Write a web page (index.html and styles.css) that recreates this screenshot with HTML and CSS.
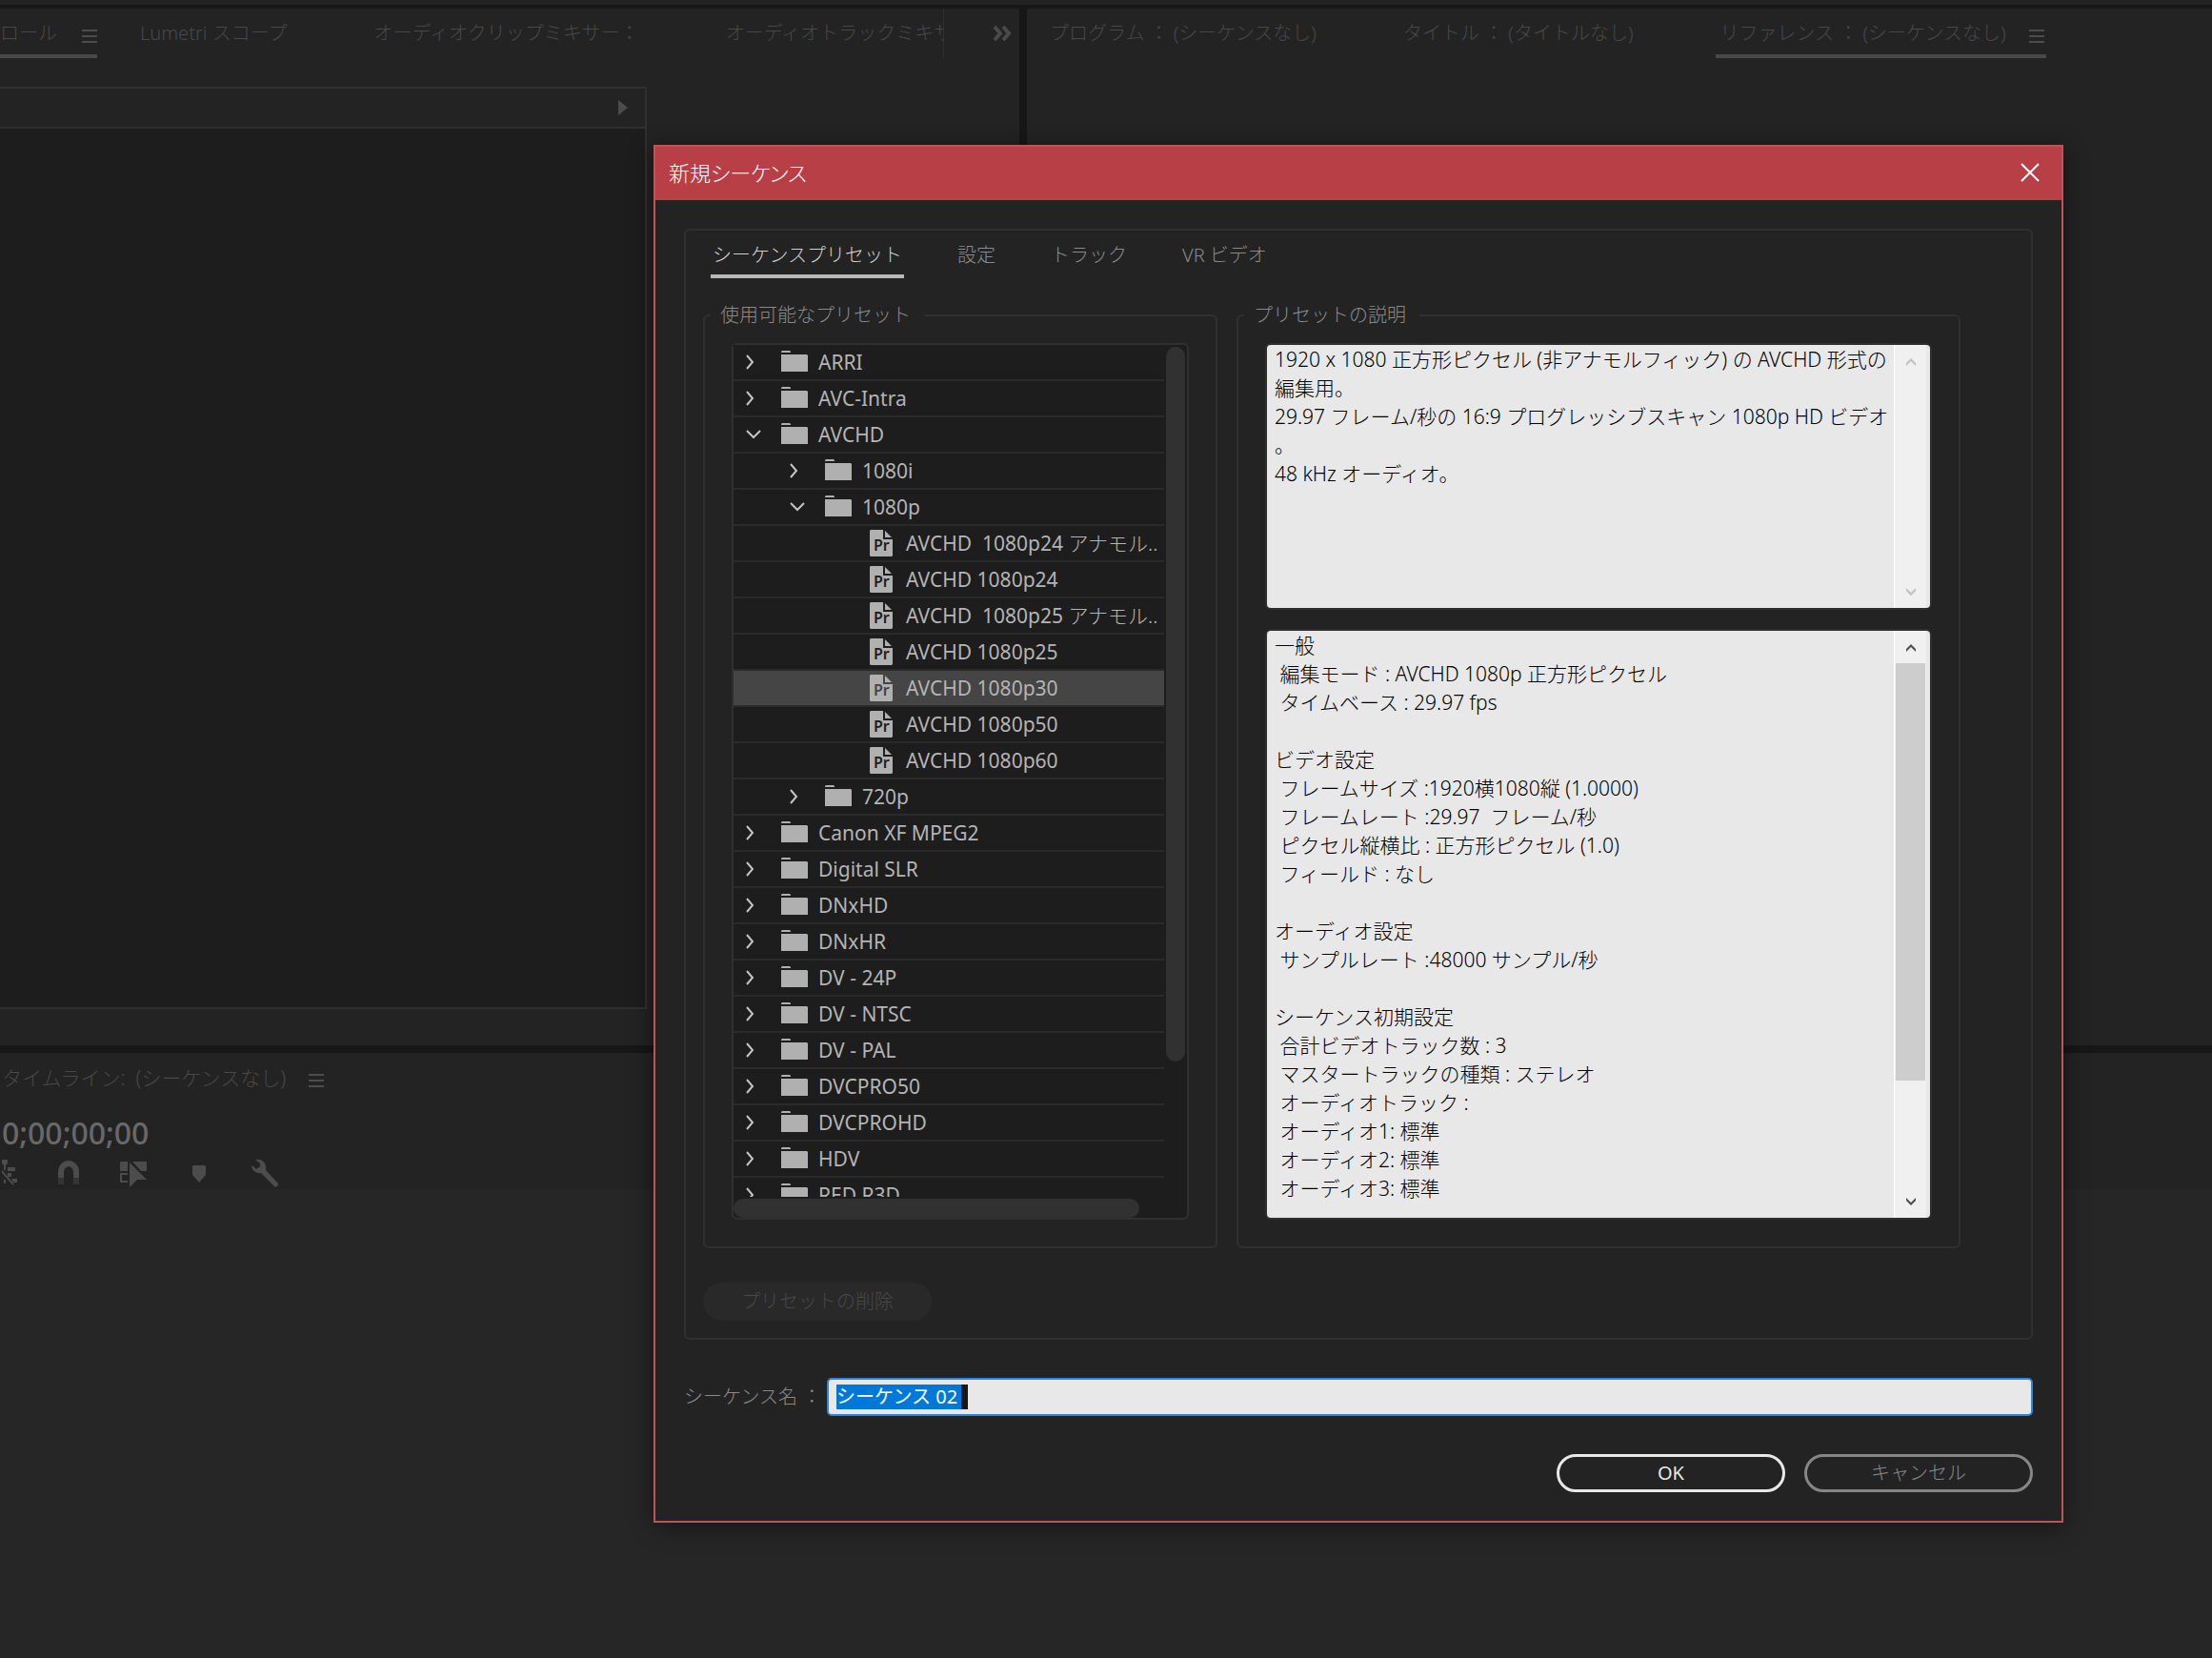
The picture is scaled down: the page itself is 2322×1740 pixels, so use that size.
FILE: index.html
```html
<!DOCTYPE html>
<html lang="ja">
<head>
<meta charset="utf-8">
<title>新規シーケンス</title>
<link rel="stylesheet" href="styles.css">
</head>
<body>
<svg class="defs" aria-hidden="true">
  <symbol id="folder" viewBox="0 0 28 22"><path d="M0 2V1L1 0H9L10 1V2ZM0 4H27L28 5V22H0Z" fill="#b0b0b0"/></symbol>
  <symbol id="closed" viewBox="0 0 16 16"><path d="M1 1L7 8L1 15" fill="none" stroke="#c4c4c4" stroke-width="2"/></symbol>
  <symbol id="opened" viewBox="0 0 16 16"><path d="M1 4L8 11L15 4" fill="none" stroke="#c4c4c4" stroke-width="2"/></symbol>
  <symbol id="preset" viewBox="0 0 24 28"><path d="M0 1L1 0H14V10H24V27L23 28H1L0 27Z" fill="#b0b0b0"/><path d="M16 1L23 8H16Z" fill="#b0b0b0"/><text x="4" y="22" class="pr">Pr</text></symbol>
  <symbol id="menu" viewBox="0 0 16 14"><path d="M0 1H16M0 7H16M0 13H16" stroke="#4c4c4c" stroke-width="2"/></symbol>
  <symbol id="up" viewBox="0 0 12 10"><path d="M1 9V6L6 1L11 6V9L6 4Z" fill="currentColor"/></symbol>
  <symbol id="down" viewBox="0 0 12 10"><path d="M1 1V4L6 9L11 4V1L6 6Z" fill="currentColor"/></symbol>
</svg>

<main class="workspace">
  <div class="topstrip"></div>
  <div class="upper">
    <section class="panel source">
      <nav class="paneltabs">
        <div class="clip">
          <button class="ptab active">ロール<svg class="menu"><use href="#menu"/></svg></button>
          <button class="ptab">Lumetri スコープ</button>
          <button class="ptab">オーディオクリップミキサー：</button>
          <button class="ptab">オーディオトラックミキサー：</button>
        </div>
        <button class="more" aria-label="その他のパネル"><svg width="20" height="16" viewBox="0 0 20 16"><path d="M2 1L8 8L2 15M11 1L17 8L11 15" fill="none" stroke="#4a4a4a" stroke-width="4"/></svg></button>
      </nav>
      <div class="effects">
        <div class="effectshead"><svg width="10" height="16"><path d="M0 0L10 8L0 16Z" fill="#4c4c4c"/></svg></div>
      </div>
    </section>
    <section class="panel program">
      <nav class="paneltabs">
        <button class="ptab">プログラム ： (シーケンスなし)</button>
        <button class="ptab">タイトル ： (タイトルなし)</button>
        <button class="ptab active">リファレンス ： (シーケンスなし)<svg class="menu"><use href="#menu"/></svg></button>
      </nav>
    </section>
  </div>
  <section class="timeline">
    <div class="timehead">
      <h2>タイムライン:&nbsp; (シーケンスなし)<svg class="menu"><use href="#menu"/></svg></h2>
      <div class="timecode">0;00;00;00</div>
      <div class="tools">
        <svg width="16" height="30" viewBox="2 0 16 30"><path d="M2 1H8V5L6 7V12H4V7L2 5ZM8 9H16V13H8ZM8 15H12V19H8ZM12 21H18V25H14ZM0 20H2V24H0ZM4 22H6V26H4Z" fill="#4c4c4c"/><path d="M0 11L14 27" stroke="#4c4c4c" stroke-width="2"/></svg>
        <svg width="22" height="30" viewBox="0 0 22 30"><path d="M3 20V14A8 9 0 0 1 19 14V20" fill="none" stroke="#4c4c4c" stroke-width="6"/><path d="M0 20H6V27H0ZM16 20H22V27H16Z" fill="#343434"/></svg>
        <svg width="28" height="30" viewBox="0 0 28 30"><path d="M0 3H8V13H0ZM13 3H28V13H22ZM10 4L28 22H18L10 30Z" fill="#4c4c4c"/><path d="M8 16H1V24H8" fill="none" stroke="#4c4c4c" stroke-width="2"/></svg>
        <svg width="24" height="30" viewBox="-5 0 24 30"><path d="M0 8L1 7H13L14 8V17L7 25L0 17Z" fill="#4c4c4c"/></svg>
        <svg width="28" height="30" viewBox="0 0 28 30"><path d="M4 1Q11 0 14 5Q16 8 15 12L28 26V28L25 30L10 15Q3 16 0 9L1 7L5 11L9 8L9 5Z" fill="#4c4c4c"/></svg>
      </div>
    </div>
  </section>
</main>

<div class="dialog" role="dialog" aria-labelledby="dlgtitle">
  <header class="titlebar">
    <h1 id="dlgtitle">新規シーケンス</h1>
    <button class="close" aria-label="閉じる"><svg width="20" height="20"><path d="M1 1L19 19M19 1L1 19" stroke="#fff" stroke-width="2"/></svg></button>
  </header>
  <div class="body">
    <div class="tabbox">
      <nav class="tabs">
        <button class="tab on">シーケンスプリセット</button>
        <button class="tab">設定</button>
        <button class="tab">トラック</button>
        <button class="tab">VR ビデオ</button>
      </nav>
      <div class="columns">
        <fieldset>
          <legend>使用可能なプリセット</legend>
          <div class="treebox">
            <ul class="tree">
              <li><svg class="arrow"><use href="#closed"/></svg><svg class="folder"><use href="#folder"/></svg>ARRI</li>
              <li><svg class="arrow"><use href="#closed"/></svg><svg class="folder"><use href="#folder"/></svg>AVC-Intra</li>
              <li><svg class="arrow"><use href="#opened"/></svg><svg class="folder"><use href="#folder"/></svg>AVCHD</li>
              <li class="l1"><svg class="arrow"><use href="#closed"/></svg><svg class="folder"><use href="#folder"/></svg>1080i</li>
              <li class="l1"><svg class="arrow"><use href="#opened"/></svg><svg class="folder"><use href="#folder"/></svg>1080p</li>
              <li class="l2"><svg class="file"><use href="#preset"/></svg>AVCHD&nbsp; 1080p24 <span class="kana">アナモル..</span></li>
              <li class="l2"><svg class="file"><use href="#preset"/></svg>AVCHD 1080p24</li>
              <li class="l2"><svg class="file"><use href="#preset"/></svg>AVCHD&nbsp; 1080p25 <span class="kana">アナモル..</span></li>
              <li class="l2"><svg class="file"><use href="#preset"/></svg>AVCHD 1080p25</li>
              <li class="l2 selected"><svg class="file"><use href="#preset"/></svg>AVCHD 1080p30</li>
              <li class="l2"><svg class="file"><use href="#preset"/></svg>AVCHD 1080p50</li>
              <li class="l2"><svg class="file"><use href="#preset"/></svg>AVCHD 1080p60</li>
              <li class="l1"><svg class="arrow"><use href="#closed"/></svg><svg class="folder"><use href="#folder"/></svg>720p</li>
              <li><svg class="arrow"><use href="#closed"/></svg><svg class="folder"><use href="#folder"/></svg>Canon XF MPEG2</li>
              <li><svg class="arrow"><use href="#closed"/></svg><svg class="folder"><use href="#folder"/></svg>Digital SLR</li>
              <li><svg class="arrow"><use href="#closed"/></svg><svg class="folder"><use href="#folder"/></svg>DNxHD</li>
              <li><svg class="arrow"><use href="#closed"/></svg><svg class="folder"><use href="#folder"/></svg>DNxHR</li>
              <li><svg class="arrow"><use href="#closed"/></svg><svg class="folder"><use href="#folder"/></svg>DV - 24P</li>
              <li><svg class="arrow"><use href="#closed"/></svg><svg class="folder"><use href="#folder"/></svg>DV - NTSC</li>
              <li><svg class="arrow"><use href="#closed"/></svg><svg class="folder"><use href="#folder"/></svg>DV - PAL</li>
              <li><svg class="arrow"><use href="#closed"/></svg><svg class="folder"><use href="#folder"/></svg>DVCPRO50</li>
              <li><svg class="arrow"><use href="#closed"/></svg><svg class="folder"><use href="#folder"/></svg>DVCPROHD</li>
              <li><svg class="arrow"><use href="#closed"/></svg><svg class="folder"><use href="#folder"/></svg>HDV</li>
              <li><svg class="arrow"><use href="#closed"/></svg><svg class="folder"><use href="#folder"/></svg>RED R3D</li>
            </ul>
            <div class="vbar"></div>
            <div class="hbar"></div>
          </div>
        </fieldset>
        <fieldset class="info">
          <legend>プリセットの説明</legend>
          <div class="textbox short">
            <textarea readonly aria-label="プリセットの説明">1920 x 1080 正方形ピクセル (非アナモルフィック) の AVCHD 形式の
編集用。
29.97 フレーム/秒の 16:9 プログレッシブスキャン 1080p HD ビデオ
。
48 kHz オーディオ。</textarea>
            <div class="scroll idle"><svg width="12" height="10"><use href="#up"/></svg><svg width="12" height="10"><use href="#down"/></svg></div>
          </div>
          <div class="textbox long">
            <textarea readonly aria-label="プリセットの詳細">一般
 編集モード : AVCHD 1080p 正方形ピクセル
 タイムベース : 29.97 fps

ビデオ設定
 フレームサイズ :1920横1080縦 (1.0000)
 フレームレート :29.97  フレーム/秒
 ピクセル縦横比 : 正方形ピクセル (1.0)
 フィールド : なし

オーディオ設定
 サンプルレート :48000 サンプル/秒

シーケンス初期設定
 合計ビデオトラック数 : 3
 マスタートラックの種類 : ステレオ
 オーディオトラック :
 オーディオ1: 標準
 オーディオ2: 標準
 オーディオ3: 標準</textarea>
            <div class="scroll"><svg width="12" height="10"><use href="#up"/></svg><div class="track"><div class="thumb"></div></div><svg width="12" height="10"><use href="#down"/></svg></div>
          </div>
        </fieldset>
      </div>
      <button class="pill delete" disabled>プリセットの削除</button>
    </div>
    <div class="namerow">
      <label for="seqname">シーケンス名 ：</label>
      <div class="field"><input id="seqname" type="text" value="シーケンス 02"><span class="caret"></span></div>
    </div>
    <div class="actions">
      <button class="pill ok">OK</button>
      <button class="pill cancel">キャンセル</button>
    </div>
  </div>
</div>
</body>
</html>
```
FILE: styles.css
```css
* { box-sizing: border-box; }
body {
  margin: 0;
  background: #262626;
  color: #8a8a8a;
  font-family: "Noto Sans", "Noto Sans CJK JP", sans-serif;
  font-size: 20px;
  font-weight: 300;
  line-height: 30px;
}
button, input, textarea { font: inherit; color: inherit; background: none; border: 0; padding: 0; margin: 0; }
h1, h2 { margin: 0; font-size: 20px; font-weight: 300; }
svg { flex: none; display: block; }
svg.defs { display: none; }

/* Workspace behind the dialog */
.workspace { display: flex; flex-direction: column; min-height: 100vh; color: #484848; }
.topstrip { height: 9px; background: #232323; border-bottom: 4px solid #171717; }
.upper { flex: 1088 1 0; display: flex; gap: 8px; background: #171717; border-bottom: 8px solid #171717; }
.panel { background: #232323; display: flex; flex-direction: column; }
.source { width: 1070px; }
.program { flex: 1; }
.paneltabs { display: flex; height: 52px; }
.program .paneltabs { padding-left: 20px; gap: 46px; }
.clip { display: flex; gap: 45px; width: 991px; overflow: hidden; border-right: 1px solid #303030; }
.more { margin-left: 51px; }
.ptab { flex: none; display: flex; align-items: center; padding: 4px 41px 0 4px; white-space: nowrap; border-bottom: 4px solid transparent; }
.clip .ptab { padding: 4px 46px 0 0; }
.ptab.active { border-color: #484848; padding-right: 2px; }
.menu { width: 16px; height: 14px; margin: 6px 0 0 24px; }
.clip .ptab.active { padding-right: 0; }
.clip .menu { margin-left: 26px; }
.effects { flex: 1; margin: 30px 391px 38px 0; border: 2px solid #303030; border-left: 0; background: #1d1d1d; }
.effectshead { height: 42px; background: #232323; border-bottom: 2px solid #303030; display: flex; justify-content: flex-end; align-items: center; padding-right: 18px; }
.timeline { flex: 635 1 0; }
.timehead { background: #232323; height: 143px; padding: 11px 0 0 2px; }
.timehead h2 { display: flex; align-items: center; font-size: 21px; line-height: 30px; }
.timecode { font-size: 32px; font-weight: 500; line-height: 40px; margin-top: 23px; color: #686868; }
.tools { display: flex; gap: 43px; margin-top: 7px; }

/* Dialog window */
.dialog { position: absolute; left: 686px; right: 156px; top: 152px; background: #232323; border: 2px solid #bd5459; box-shadow: 0 4px 24px rgba(0, 0, 0, .45); }
.titlebar { height: 56px; background: #b83f46; display: flex; justify-content: space-between; align-items: center; padding: 0 23px 2px 14px; color: #fff; }
.titlebar h1 { font-size: 22px; font-weight: 300; font-feature-settings: "palt"; }
.body { padding: 30px; }
.tabbox { border: 2px solid #303030; border-radius: 6px; padding: 0 18px 18px; }
.tabs { display: flex; gap: 54px; padding-left: 8px; height: 50px; }
.tab { padding: 6px 2px 0; border-bottom: 4px solid transparent; color: #8a8a8a; }
.tab.on { color: #d0d0d0; border-color: #b8b8b8; }
.columns { display: grid; grid-template-columns: 540fr 760fr; gap: 20px; margin-top: 24px; padding-right: 56px; }
fieldset { min-width: 0; margin: 0; border: 2px solid #303030; border-radius: 6px; padding: 14px 28px 28px; }
legend { margin-left: -22px; padding: 0 14px 0 10px; }

.treebox { height: 920px; display: grid; grid-template-columns: 1fr 24px; grid-template-rows: 894px 20px; row-gap: 2px; background: #1d1d1d; border: 2px solid #303030; border-radius: 6px; }
.tree { list-style: none; margin: 0; padding: 0; overflow: hidden; font-size: 21px; font-weight: 400; color: #b4b4b4; }
.tree li { --row: #1d1d1d; height: 38px; padding-left: 13px; display: flex; align-items: center; white-space: pre; background: var(--row); border-bottom: 2px solid #2a2a2a; }
.tree .l1 { padding-left: 59px; }
.tree .l2 { padding-left: 143px; }
.tree .selected { --row: #454545; }
.arrow { width: 16px; height: 16px; margin-right: 21px; }
.folder { width: 28px; height: 22px; margin: 0 11px 2px 0; }
.file { width: 24px; height: 28px; margin-right: 14px; }
.pr { font: 600 16px "Noto Sans", sans-serif; fill: var(--row); }
.kana { font-weight: 300; }
.vbar { margin: 2px 2px 142px; border-radius: 10px; background: #313131; }
.hbar { margin-right: 26px; border-radius: 10px; background: #313131; }

.info { display: flex; flex-direction: column; }
.textbox { display: flex; border: 2px solid #2e2e2e; border-radius: 6px; background: #e8e8e8; overflow: hidden; }
.short { height: 280px; margin-bottom: 20px; }
.long { height: 620px; }
textarea { flex: 1; min-width: 0; resize: none; overflow: hidden; white-space: pre; color: #000; font-size: 21px; padding-left: 8px; outline: 0; }
.scroll { width: 34px; margin-right: 4px; border-left: 1px solid #fff; background: #f0f0f0; display: flex; flex-direction: column; justify-content: space-between; align-items: center; padding: 13px 0 12px; color: #505050; }
.idle { color: #c0c0c0; }
.track { flex: 1; align-self: stretch; margin: 11px 1px 12px; }
.thumb { height: 80%; background: #cdcdcd; }

.pill { width: 240px; height: 40px; border-radius: 20px; line-height: 30px; }
.delete { margin-top: 36px; background: #292929; color: #484848; display: block; }
.namerow { display: flex; align-items: center; margin-top: 40px; }
.namerow label { width: 150px; white-space: nowrap; }
.field { flex: 1; height: 40px; display: flex; align-items: center; padding-left: 8px; background: #e8e8e8; border: 2px solid #2d86dd; border-radius: 5px; }
.field input { width: 131px; height: 26px; line-height: 26px; background: #0078d7; color: #fff; font-weight: 400; outline: 0; }
.caret { width: 7px; height: 26px; background: #1a1613; }
.actions { display: flex; justify-content: flex-end; gap: 20px; margin-top: 40px; }
.ok { border: 3px solid #e8e8e8; color: #e8e8e8; font-weight: 400; }
.cancel { border: 3px solid #868686; color: #868686; }
```
